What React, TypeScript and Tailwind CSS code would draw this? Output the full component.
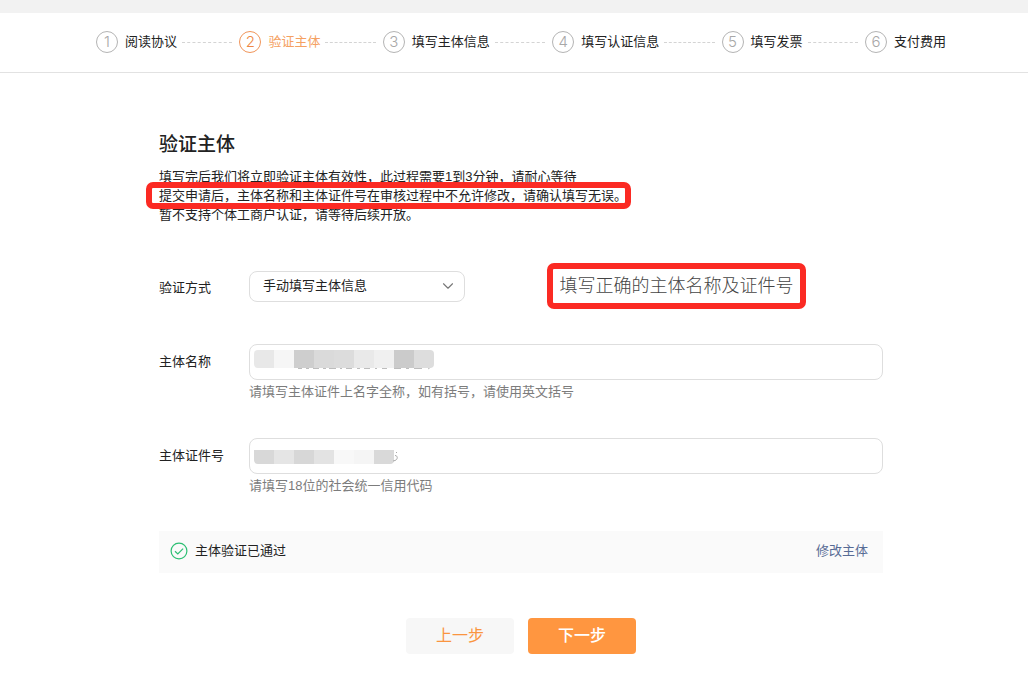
import { useState } from "react";
import { ChevronDown } from "lucide-react";
import { clsx } from "clsx";

const steps = [
  "阅读协议",
  "验证主体",
  "填写主体信息",
  "填写认证信息",
  "填写发票",
  "支付费用",
];

const nameMask = [
  "bg-[#e8e8e8]",
  "bg-[#f6f6f6]",
  "bg-[#cecece]",
  "bg-[#dadada]",
  "bg-[#dcdcdc]",
  "bg-[#e9e9e9]",
  "bg-[#f0f0f0]",
  "bg-[#cbcbcb]",
  "bg-[#dddddd]",
];

const codeMask = [
  "bg-[#d8d8d8]",
  "bg-[#e5e5e5]",
  "bg-[#d7d7d7]",
  "bg-[#e3e3e3]",
  "bg-[#f8f8f8]",
  "bg-[#f5f5f5]",
  "bg-[#d9d9d9]",
];

function Steps({ current }: { current: number }) {
  return (
    <ol className="mx-auto flex w-full max-w-[850px] items-center">
      {steps.map((label, index) => {
        const active = index + 1 === current;
        return (
          <li
            key={label}
            className={clsx(
              "flex items-center whitespace-nowrap",
              index < steps.length - 1 && "flex-auto"
            )}
          >
            <span
              className={clsx(
                "flex size-[22px] shrink-0 items-center justify-center rounded-full border font-['Inter'] text-[15px] leading-5 font-light",
                active
                  ? "border-[#f0955a] text-[#ee8844]"
                  : "border-[#b4b4b4] text-[#a8a8a8]"
              )}
            >
              {index + 1}
            </span>
            <span
              className={clsx(
                "ml-[7px] text-[13px] leading-5",
                active ? "text-[#f5a162]" : "text-[#222222]"
              )}
            >
              {label}
            </span>
            {index < steps.length - 1 && (
              <span className="mr-[7px] ml-[5px] h-0 flex-1 border-t border-dashed border-[#d4d4d4]" />
            )}
          </li>
        );
      })}
    </ol>
  );
}

interface MaskProps {
  blocks: string[];
  className?: string;
}

function Mask({ blocks, className }: MaskProps) {
  return (
    <div className={clsx("absolute left-[5px] flex overflow-hidden", className)}>
      {blocks.map((color, index) => (
        <span key={index} className={clsx("h-full w-5", color)} />
      ))}
    </div>
  );
}

interface FieldProps {
  id: string;
  label: string;
  hint: string;
  children: React.ReactNode;
}

function Field({ id, label, hint, children }: FieldProps) {
  return (
    <div className="flex">
      <label htmlFor={id} className="w-[90px] shrink-0 text-[13px] leading-9">
        {label}
      </label>
      <div className="min-w-0 flex-1">
        <div className="relative">
          <input
            id={id}
            type="text"
            className="block h-9 w-full rounded-lg border border-[#dedede] bg-white px-3 text-[13px] outline-none"
          />
          {children}
        </div>
        <p className="mt-0.5 text-[13px] leading-5 text-[#7c7c7c]">{hint}</p>
      </div>
    </div>
  );
}

export default function App() {
  const [method, setMethod] = useState("manual");

  return (
    <div className="min-h-screen bg-white font-['Liberation_Sans','Noto_Sans_CJK_SC',sans-serif] text-[#222222]">
      <div className="h-[13px] bg-[#f2f2f2]" />
      <header className="flex h-[60px] items-center border-b border-[#e2e2e2] pb-px pl-3.5">
        <Steps current={2} />
      </header>

      <main className="pl-3.5">
        <div className="mx-auto max-w-[724px] pt-[58px] pb-11">
          <h1 className="text-[19px] leading-7 font-medium">验证主体</h1>
          <div className="mt-2 text-[13px] leading-[19px] whitespace-nowrap">
            <p>填写完后我们将立即验证主体有效性，此过程需要1到3分钟，请耐心等待</p>
            <p className="relative w-fit">
              提交申请后，主体名称和主体证件号在审核过程中不允许修改，请确认填写无误。
              <span className="absolute -inset-y-1 -right-1 -left-[13px] rounded-[7px] border-6 border-[#fb2a23]" />
            </p>
            <p>暂不支持个体工商户认证，请等待后续开放。</p>
          </div>

          <form onSubmit={(e) => e.preventDefault()}>
            <div className="mt-[39px] flex items-center">
              <label
                htmlFor="method"
                className="w-[90px] shrink-0 pt-1 text-[13px]"
              >
                验证方式
              </label>
              <div className="relative w-[216px]">
                <select
                  id="method"
                  value={method}
                  onChange={(e) => setMethod(e.target.value)}
                  className="block h-[31px] w-full appearance-none rounded-lg border border-[#dedede] bg-white pr-8 pl-[13px] text-[13px] outline-none"
                >
                  <option value="manual">手动填写主体信息</option>
                </select>
                <ChevronDown
                  className="pointer-events-none absolute top-1.5 right-2 size-[18px] text-[#777777]"
                  strokeWidth={1.5}
                />
              </div>
              <p className="ml-[82px] flex h-[46px] w-[259px] items-center justify-center rounded-[7px] border-6 border-[#fb2a23] text-[18px] leading-6 font-light whitespace-nowrap text-[#444444]">
                填写正确的主体名称及证件号
              </p>
            </div>

            <div className="mt-[35px] flex flex-col gap-9">
              <Field
                id="name"
                label="主体名称"
                hint="请填写主体证件上名字全称，如有括号，请使用英文括号"
              >
                <svg
                  className="absolute top-[22px] left-[46px] h-1 w-[140px]"
                  viewBox="0 0 140 4"
                  fill="none"
                  stroke="#bdbdbd"
                >
                  <path d="M3 2.5h4M11 2.5h3M18 2.5h6M28 2.5h3M34 2.5h7M45 2.5h2M51 2.5h6M62 2.5h3M69 2.5h6M80 2.5h2M87 2.5h5M99 2.5h7M111 2.5h3M119 2.5h8M133 3l3-2" />
                </svg>
                <Mask blocks={nameMask} className="top-[6px] h-[18px] rounded" />
              </Field>
              <Field
                id="code"
                label="主体证件号"
                hint="请填写18位的社会统一信用代码"
              >
                <Mask
                  blocks={codeMask}
                  className="top-3 h-[14px] rounded-b"
                />
                <svg
                  className="absolute top-[13px] left-[143px] h-3 w-2"
                  viewBox="0 0 8 12"
                  fill="none"
                  stroke="#a8a8a8"
                >
                  <path d="M4 1.5h1M3 4.5c3 0 3 4 0 5l-2 .5" />
                </svg>
              </Field>
            </div>

            <div className="mt-[35px] flex h-[42px] items-center bg-[#fafafa] pr-[15px] pb-0.5 pl-[11px] text-[13px]">
              <svg
                className="size-[18px]"
                viewBox="0 0 18 18"
                fill="none"
                stroke="#2cbf73"
                strokeWidth="1.2"
              >
                <circle cx="9" cy="9" r="7.9" />
                <path d="M5 9.2l2.8 2.7 5.3-5.3" />
              </svg>
              <span className="ml-[7px]">主体验证已通过</span>
              <a href="#edit" className="ml-auto text-[#576b95]">
                修改主体
              </a>
            </div>

            <div className="mt-[45px] flex justify-center gap-3.5">
              <button
                type="button"
                className="h-9 w-[108px] rounded bg-[#f7f7f7] text-base text-[#fa9540]"
              >
                上一步
              </button>
              <button
                type="submit"
                className="h-9 w-[108px] rounded bg-[#ff9640] text-base font-medium text-white"
              >
                下一步
              </button>
            </div>
          </form>
        </div>
      </main>
    </div>
  );
}
